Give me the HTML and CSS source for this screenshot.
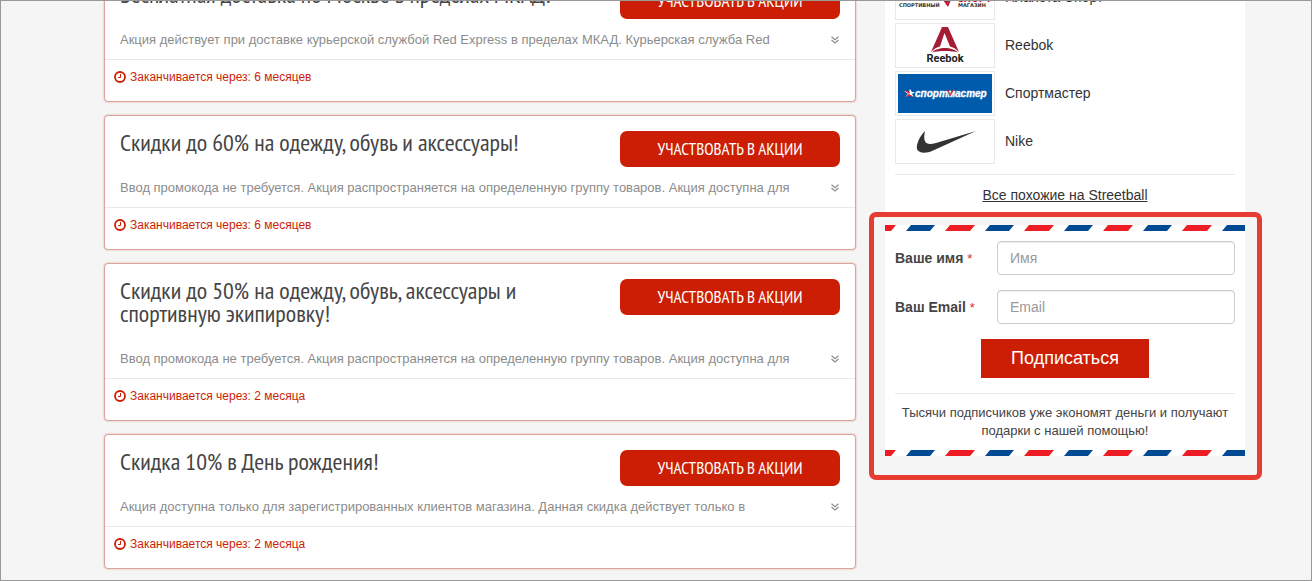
FILE: index.html
```html
<!DOCTYPE html>
<html lang="ru">
<head>
<meta charset="utf-8">
<title>Акции</title>
<link rel="stylesheet" href="styles.css">
</head>
<body>
<svg class="defs" aria-hidden="true">
  <defs>
    <pattern id="airmail" width="79" height="6" patternUnits="userSpaceOnUse">
      <path fill="#004a93" d="M21 6 26 0H50L45 6z"/>
      <path fill="#ee1c25" d="M60 6 65 0H89L84 6zM-19 6-14 0H11L6 6z"/>
    </pattern>
    <symbol id="clock" viewBox="0 0 12 12">
      <circle cx="6" cy="6" r="5" fill="none" stroke="currentColor" stroke-width="1.8"/>
      <path d="M6.5 3V6.5H4" fill="none" stroke="currentColor" stroke-width="1"/>
    </symbol>
    <symbol id="more" viewBox="0 0 8 8">
      <path d="M.5.8 4 3.8 7.500.8M.5 4 4 7 7.500 4" fill="none" stroke="currentColor" stroke-width="1.200"/>
    </symbol>
  </defs>
</svg>
<div class="page">
  <main class="offers">
    <article class="card">
      <div class="card-head"><h2>Бесплатная доставка по Москве в пределах МКАД!</h2><button class="join" type="button">УЧАСТВОВАТЬ В АКЦИИ</button></div>
      <div class="card-text"><p>Акция действует при доставке курьерской службой Red Express в пределах МКАД. Курьерская служба Red</p><svg class="more"><use href="#more"/></svg></div>
      <div class="card-foot"><svg class="clock"><use href="#clock"/></svg>Заканчивается через: 6 месяцев</div>
    </article>
    <article class="card">
      <div class="card-head"><h2>Скидки до 60% на одежду, обувь и аксессуары!</h2><button class="join" type="button">УЧАСТВОВАТЬ В АКЦИИ</button></div>
      <div class="card-text"><p>Ввод промокода не требуется. Акция распространяется на определенную группу товаров. Акция доступна для</p><svg class="more"><use href="#more"/></svg></div>
      <div class="card-foot"><svg class="clock"><use href="#clock"/></svg>Заканчивается через: 6 месяцев</div>
    </article>
    <article class="card">
      <div class="card-head"><h2>Скидки до 50% на одежду, обувь, аксессуары и спортивную экипировку!</h2><button class="join" type="button">УЧАСТВОВАТЬ В АКЦИИ</button></div>
      <div class="card-text"><p>Ввод промокода не требуется. Акция распространяется на определенную группу товаров. Акция доступна для</p><svg class="more"><use href="#more"/></svg></div>
      <div class="card-foot"><svg class="clock"><use href="#clock"/></svg>Заканчивается через: 2 месяца</div>
    </article>
    <article class="card">
      <div class="card-head"><h2>Скидка 10% в День рождения!</h2><button class="join" type="button">УЧАСТВОВАТЬ В АКЦИИ</button></div>
      <div class="card-text"><p>Акция доступна только для зарегистрированных клиентов магазина. Данная скидка действует только в</p><svg class="more"><use href="#more"/></svg></div>
      <div class="card-foot"><svg class="clock"><use href="#clock"/></svg>Заканчивается через: 2 месяца</div>
    </article>
  </main>
  <aside class="side">
    <section class="similar">
      <ul class="shops">
        <li><svg class="logo wide" viewBox="0 0 98 43">
          <text x="61" y="26" font-size="9" fill="#c4122f">СПОРТ</text>
          <text x="3" y="31" font-size="5" fill="#333">СПОРТИВНЫЙ</text>
          <path d="M47 24 52 31 55 24H53L52 27 50 24z" fill="#c4122f"/>
          <path d="M50 24 52 27 53 24z" fill="#333"/>
          <text x="62" y="31" font-size="5" fill="#333">МАГАЗИН</text>
        </svg><span>Планета Спорт</span></li>
        <li><svg class="logo sturdy" viewBox="0 0 98 43">
          <path d="M46 3H52L63 28C60 25 57 23 54 22.500L48.500 9 44 22.500C41 23 38 25 35 28z" fill="#a51c36"/>
          <path d="M36 28.500C41 22.500 57 22.500 62 28.500 56 26.500 42 26.500 36 28.500z" fill="#a51c36"/>
          <text x="49" y="38" font-size="11" text-anchor="middle" fill="#222">Reebok</text>
        </svg><span>Reebok</span></li>
        <li><svg class="logo" viewBox="0 0 98 43">
          <path d="M2 2H96V41H2z" fill="#005bac"/>
          <path d="M8 19 13 20 14 17 16 20 19 20 16 22 18 25 13 23 9 25 12 22z" fill="#fff"/>
          <path d="M8 18 14 20 13 22zM9 25 13 22 18 25 13 24z" fill="#e31e24"/>
          <text x="19" y="25" font-size="10" font-style="italic" fill="#fff" stroke="#fff" stroke-width=".3">спортмастер</text>
          <path d="M52 18 54 22 58 17 54 24z" fill="#e31e24" stroke="#e31e24" stroke-width=".6"/>
        </svg><span>Спортмастер</span></li>
        <li><svg class="logo" viewBox="0 0 98 43">
          <path d="M29 11C24 16 20 24 21 29 23 34 31 33 36 31L80 11 40 23C32 25 26 25 29 11z" fill="#333"/>
        </svg><span>Nike</span></li>
      </ul>
      <div class="all"><a href="#">Все похожие на Streetball</a></div>
    </section>
    <div class="subscribe-wrap">
      <form class="subscribe">
        <svg class="stripe"><rect width="100%" height="6" fill="url(#airmail)"/></svg>
        <div class="fields">
          <label for="name">Ваше имя <b>*</b></label><input id="name" type="text" placeholder="Имя">
          <label for="email">Ваш Email <b>*</b></label><input id="email" type="email" placeholder="Email">
        </div>
        <button class="send" type="button">Подписаться</button>
        <p class="note">Тысячи подписчиков уже экономят деньги и получают подарки с нашей помощью!</p>
        <svg class="stripe"><rect width="100%" height="6" fill="url(#airmail)"/></svg>
      </form>
    </div>
  </aside>
</div>
</body>
</html>
```
FILE: styles.css
```css
* { box-sizing: border-box; }
body { margin: 0; background: #f5f5f5; color: #333; font: 14px/20px "Liberation Sans", Arial, sans-serif; }
h2, p, ul { margin: 0; padding: 0; }
.defs { position: absolute; width: 0; height: 0; }
.page { display: flex; align-items: flex-start; gap: 29px; height: 100vh; padding: 0 66px 0 103px; border: 1px solid #999; overflow: hidden; }
.offers { flex: 1; display: flex; flex-direction: column; gap: 13px; margin-top: -34px; }
.card { background: #fff; border: 1px solid #dba39c; border-radius: 4px; box-shadow: 0 0 2px #dba39c; }
.card-head { display: flex; justify-content: space-between; align-items: flex-start; padding: 15px 15px 0; }
.card-head h2 { flex: 1; padding: 0 60px 25px 0; color: #444; font: 400 24px/23px "PT Sans Narrow", "Liberation Sans Narrow", sans-serif; }
.join { width: 220px; height: 36px; padding: 0; border: 0; border-radius: 7px; background: #cc1e04; color: #fff; font: 400 17px/36px "PT Sans Narrow", "Liberation Sans Narrow", sans-serif; }
.card-text { display: flex; justify-content: space-between; align-items: center; padding: 0 16px 10px 15px; color: #8c8c8c; font-size: 13px; line-height: 18px; }
.more { width: 8px; height: 8px; }
.card-foot { display: flex; align-items: center; gap: 4px; padding: 8px 9px 15px; border-top: 1px solid #e9e9e9; color: #cc1e04; font-size: 12px; line-height: 18px; }
.clock { width: 12px; height: 12px; }
.side { width: 360px; margin-top: -36px; }
.similar { padding: 10px 10px 8px; background: #fff; }
.shops { list-style: none; display: grid; gap: 3px; padding-bottom: 10px; border-bottom: 1px solid #e9e9e9; }
.shops li { display: flex; align-items: center; gap: 10px; }
.shops span { padding-bottom: 2px; }
.logo { width: 100px; height: 45px; border: 1px solid #e9e9e9; font-family: "Liberation Sans", sans-serif; font-weight: 700; }
.logo.wide { font-family: "DejaVu Sans", sans-serif; }
.logo.sturdy { font-family: Roboto, sans-serif; }
.all { padding-top: 10px; text-align: center; }
.all a { color: #333; }
.subscribe-wrap { position: relative; padding-top: 12px; }
.subscribe-wrap::after { content: ""; position: absolute; inset: -1px -17px -24px -16px; border: 5px solid #e63c32; border-radius: 7px; pointer-events: none; }
.subscribe { background: #fff; text-align: center; }
.stripe { display: block; width: 100%; height: 6px; }
.fields { display: grid; grid-template-columns: 102px 1fr; align-items: center; row-gap: 15px; padding: 10px 10px 15px; text-align: left; }
.fields label { color: #444; font-weight: 700; }
.fields b { color: #e02b20; font-weight: 400; font-size: 13px; }
.fields input { width: 100%; height: 34px; padding: 6px 12px; border: 1px solid #ccc; border-radius: 4px; background: #fff; font: inherit; box-shadow: inset 0 1px 1px #0001; }
.fields input::placeholder { color: #999; }
.send { height: 39px; padding: 0 30px; border: 0; background: #cc1e04; color: #fff; font: 18px/39px "Liberation Sans", Arial, sans-serif; }
.note { margin: 15px 10px 0; padding: 10px 0; border-top: 1px solid #e9e9e9; color: #444; font-size: 13px; line-height: 18px; }
```
